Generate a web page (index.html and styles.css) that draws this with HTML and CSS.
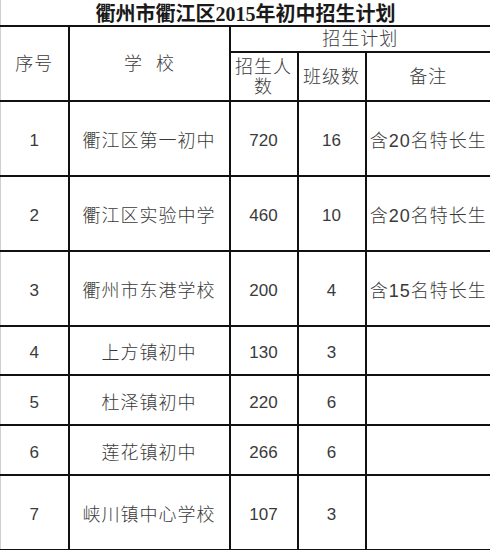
FILE: index.html
```html
<!DOCTYPE html>
<html lang="zh-CN">
<head>
<meta charset="utf-8">
<title>衢州市衢江区2015年初中招生计划</title>
<link rel="stylesheet" href="styles.css">
</head>
<body>
<table class="plan">
  <colgroup>
    <col class="c-no">
    <col class="c-school">
    <col class="c-num">
    <col class="c-class">
    <col class="c-note">
  </colgroup>
  <tr class="r-title">
    <th class="title" colspan="5">衢州市衢江区2015年初中招生计划</th>
  </tr>
  <tr class="r-h1">
    <th rowspan="2">序号</th>
    <th rowspan="2"><span class="spaced">学校</span></th>
    <th colspan="3">招生计划</th>
  </tr>
  <tr class="r-h2">
    <th class="wrap">招生人<br>数</th>
    <th>班级数</th>
    <th>备注</th>
  </tr>
  <tr class="r-tall">
    <td>1</td><td>衢江区第一初中</td><td>720</td><td>16</td><td>含20名特长生</td>
  </tr>
  <tr class="r-tall">
    <td>2</td><td>衢江区实验中学</td><td>460</td><td>10</td><td>含20名特长生</td>
  </tr>
  <tr class="r-tall">
    <td>3</td><td>衢州市东港学校</td><td>200</td><td>4</td><td>含15名特长生</td>
  </tr>
  <tr class="r-short">
    <td>4</td><td>上方镇初中</td><td>130</td><td>3</td><td></td>
  </tr>
  <tr class="r-mid">
    <td>5</td><td>杜泽镇初中</td><td>220</td><td>6</td><td></td>
  </tr>
  <tr class="r-mid">
    <td>6</td><td>莲花镇初中</td><td>266</td><td>6</td><td></td>
  </tr>
  <tr class="r-last">
    <td>7</td><td>峡川镇中心学校</td><td>107</td><td>3</td><td></td>
  </tr>
</table>
</body>
</html>
```
FILE: styles.css
```css
html, body {
  margin: 0;
  padding: 0;
  background: #ffffff;
}

.plan {
  width: 490px;
  border-collapse: collapse;
  table-layout: fixed;
  font-family: "Liberation Sans", "Noto Sans CJK SC", sans-serif;
  font-size: 18px;
  font-weight: 300;
  color: #3a3a3a;
}

.c-no { width: 68px; }
.c-school { width: 161px; }
.c-num { width: 68px; }
.c-class { width: 68px; }
.c-note { width: 125px; }

.plan th,
.plan td {
  border: 2px solid #111111;
  padding: 0;
  text-align: center;
  vertical-align: middle;
  font-weight: 300;
  line-height: 20px;
  white-space: nowrap;
  letter-spacing: 1px;
}

.plan td {
  padding-top: 5px;
}

.plan td:nth-child(1),
.plan td:nth-child(3),
.plan td:nth-child(4) {
  font-size: 17px;
  letter-spacing: 0;
}

.plan tr > :first-child {
  border-left: 1px solid #cfcfcf;
}

.plan tr > :last-child {
  border-right: 1px solid #cfcfcf;
}

.plan .title {
  border-top: none;
  border-left: 1px solid #cfcfcf;
  border-right: 1px solid #cfcfcf;
  font-family: "Liberation Serif", "Noto Sans CJK SC", serif;
  font-weight: bold;
  font-size: 20px;
  letter-spacing: 0;
  color: #1a1a1a;
  line-height: 22px;
  padding-top: 3px;
}

.r-title { height: 25px; }
.r-h1 { height: 26px; }
.r-h2 { height: 49px; }
.r-tall { height: 75px; }
.r-short { height: 49px; }
.r-mid { height: 50px; }
.r-last { height: 75px; }

.spaced {
  letter-spacing: 14px;
  margin-right: -14px;
}

.wrap {
  white-space: normal;
}
```
